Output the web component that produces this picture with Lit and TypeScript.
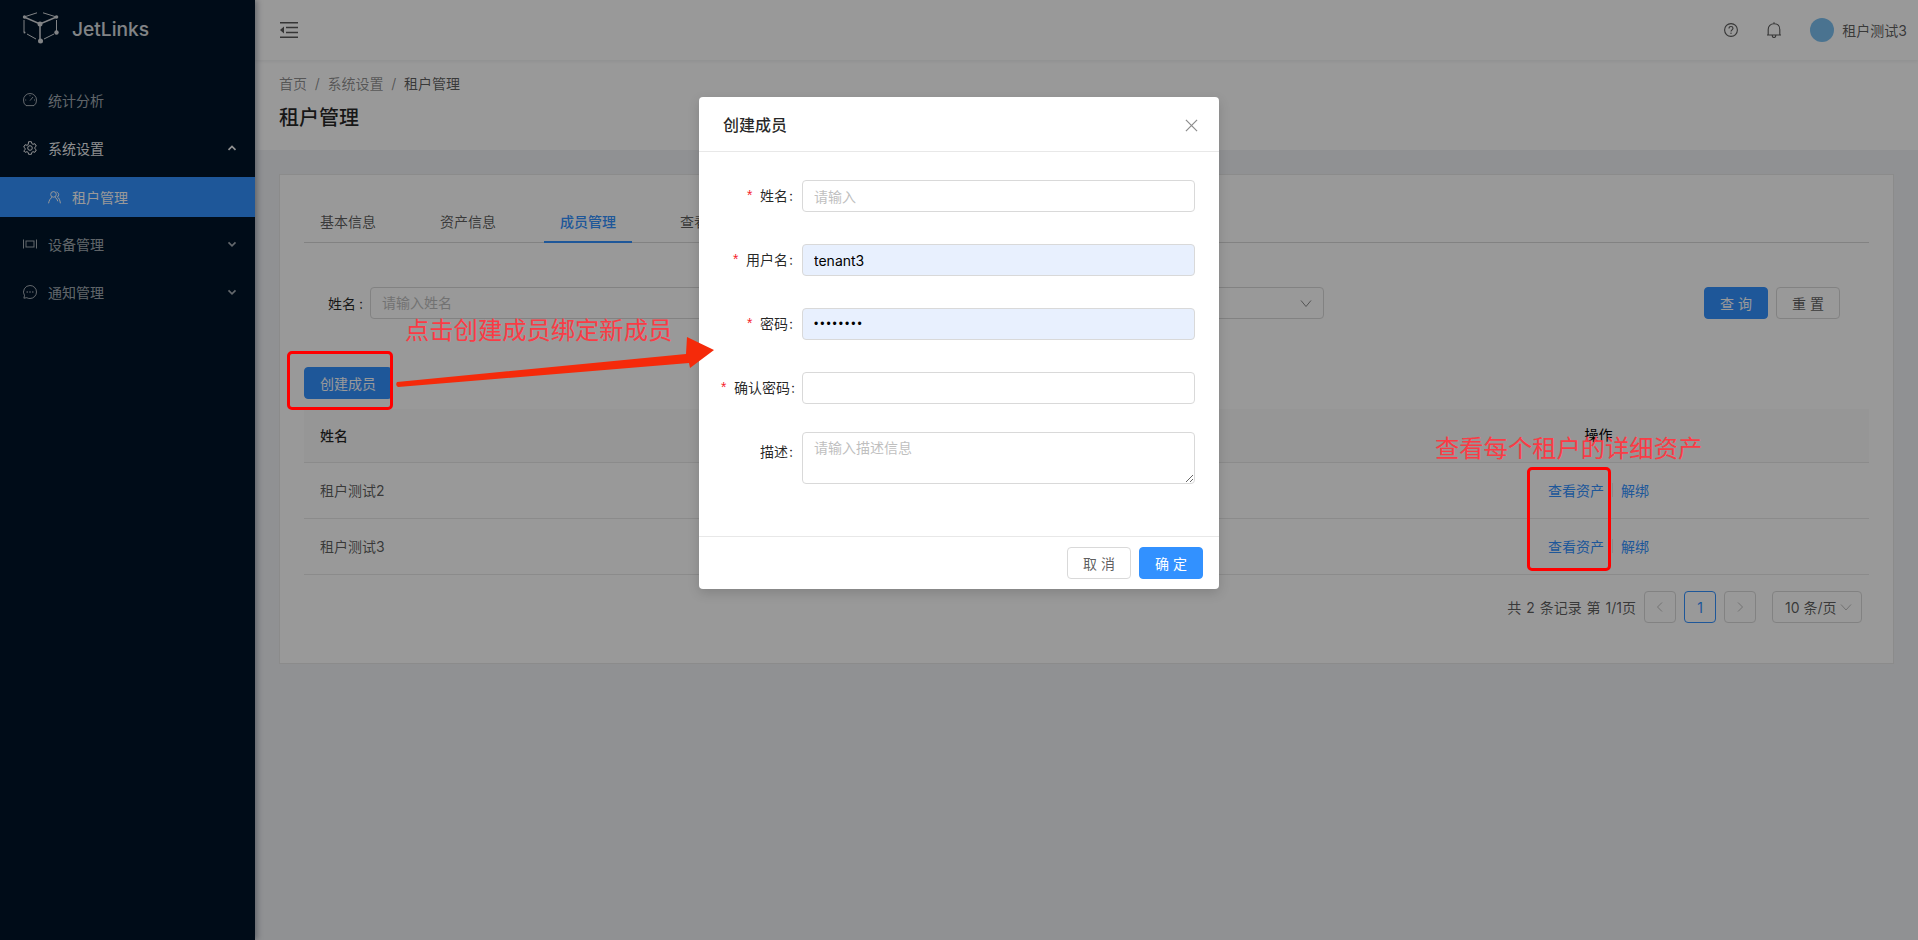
import { LitElement, html, css } from "lit";
import { customElement } from "lit/decorators.js";

const chevron = (up: boolean) => html`<svg class="chev" width="10" height="10" viewBox="0 0 10 10" fill="none" stroke="currentColor" stroke-width="1.7"><path d=${up ? "M1.5 6.800 5 3.400l3.500 3.400" : "M1.500 3.400 5 6.800l3.500-3.400"}></path></svg>`;

const icons = {
  dash: html`<svg class="mi" width="14" height="14" viewBox="0 0 14 14" fill="none" stroke="currentColor" stroke-width="1"><path d="M3 12.600h8A6.500 6.500 0 0 0 13.500 7 6.500 6.500 0 0 0 .5 7 6.500 6.500 0 0 0 3 12.600Z"></path><path d="m7 7.600 3-3.600M2.200 7h1M11 7h1M7 2.200v1"></path></svg>`,
  gear: html`<svg class="mi" width="14" height="14" viewBox="0 0 14 14" fill="none" stroke="currentColor" stroke-width="1"><path d="M5.600.7h2.800l.4 1.900 1.200.7 1.900-.6 1.400 2.400-1.500 1.300v1.200l1.500 1.300-1.400 2.400-1.900-.6-1.200.7-.4 1.900H5.600l-.4-1.900-1.200-.7-1.900.6L.7 9.900l1.500-1.300V7.400L.7 6.100l1.400-2.400 1.900.6 1.200-.7Z"></path><circle cx="7" cy="7" r="2.300"></circle></svg>`,
  users: html`<svg class="mi" width="13" height="13" viewBox="0 0 13 13" fill="none" stroke="currentColor" stroke-width="1"><circle cx="5.500" cy="3.400" r="2.800"></circle><path d="M.6 12.300C1 9.500 2.400 7.200 4 6.300M7 6.300c1.300.7 2.300 2 2.800 4"></path><path d="M8.600 1c1.300.3 2.100 1.400 2.100 2.600 0 1-.5 1.900-1.300 2.400 1.400.8 2.600 3 3 6.300"></path></svg>`,
  device: html`<svg class="mi" width="14" height="14" viewBox="0 0 14 14" fill="none" stroke="currentColor" stroke-width="1"><path d="M.5 2.500v9M13.500 2.500v9"></path><rect x="3" y="4" width="8" height="6"></rect></svg>`,
  msg: html`<svg class="mi" width="14" height="14" viewBox="0 0 14 14" fill="none" stroke="currentColor" stroke-width="1"><path d="M7 .5a6.500 6.500 0 1 1 0 13c-1.200 0-2.300-.2-3.200-.8l-2.900.5.6-2.700A6.500 6.500 0 0 1 7 .5Z"></path><circle cx="4.200" cy="7" r=".8" fill="currentColor" stroke="none"></circle><circle cx="7" cy="7" r=".8" fill="currentColor" stroke="none"></circle><circle cx="9.800" cy="7" r=".8" fill="currentColor" stroke="none"></circle></svg>`,
};

@customElement("app-root")
export class AppRoot extends LitElement {
  static styles = css`
    :host { display: block; width: 1918px; height: 940px; position: relative; overflow: hidden;
      font-family: Inter, "Noto Sans CJK SC", sans-serif; font-size: 14px; color: rgba(0,0,0,.65); background: #f0f2f5; }
    * { box-sizing: border-box; }
    .app { display: grid; grid-template-columns: 255px 1fr; height: 940px; }
    .side { background: #001529; color: rgba(255,255,255,.65); box-shadow: 2px 0 6px rgba(0,21,41,.35); position: relative; z-index: 1; }
    .logo { height: 60px; display: flex; align-items: center; padding-left: 22px; gap: 12px; color: #fff; opacity: .85; }
    .logo span { font-size: 19.200px; font-weight: 500; margin-top: -2px; }
    .logo svg { margin-top: -2px; }
    .menu { padding-top: 21px; }
    .mitem { height: 40px; margin-bottom: 8px; display: flex; align-items: center; padding: 0 0 2px 23px; gap: 11px; position: relative; }
    .mitem.open { color: rgba(255,255,255,.95); }
    .mitem .chev { position: absolute; right: 18px; top: 14px; }
    .msub { height: 40px; margin: 0 0 8px; display: flex; align-items: center; padding-left: 48px; gap: 11px; background: #3291ff; color: #fff; }
    .main { display: flex; flex-direction: column; min-width: 0; }
    .top { height: 60px; background: #fff; display: flex; align-items: center; padding: 0 11px 0 25px; box-shadow: 0 1px 4px rgba(0,21,41,.08); position: relative; }
    .top .right { margin-left: auto; display: flex; align-items: center; color: rgba(0,0,0,.65); }
    .top .q { margin-right: 29px; }
    .top .b { margin-right: 29px; }
    .avatar { width: 24px; height: 24px; border-radius: 50%; background: #7cc0f0; margin-right: 8px; }
    .phead { background: #fff; height: 90px; padding: 13px 24px 0; }
    .crumb { display: flex; line-height: 22px; color: rgba(0,0,0,.45); }
    .crumb i { font-style: normal; padding: 0 7.750px; }
    .crumb b { font-weight: 400; color: rgba(0,0,0,.65); }
    .title { font-size: 20px; font-weight: 500; line-height: 28px; color: rgba(0,0,0,.85); margin-top: 9px; }
    .card { margin: 24px 24px 0; height: 490px; background: #fff; border: 1px solid #e8e8e8; padding: 24px 24px; }
    .tabs { display: flex; height: 44px; border-bottom: 1px solid #d9d9d9; }
    .tab { width: 88px; margin-right: 32px; text-align: center; line-height: 22px; padding-top: 12px; height: 44px; }
    .tab.on { color: #3291ff; font-weight: 500; border-bottom: 2px solid #3291ff; }
    .search { display: flex; align-items: center; height: 32px; margin-top: 44px; padding-left: 24px; color: rgba(0,0,0,.85); }
    .search .lab { width: 42px; }
    .search .colon { margin-left: 3px; }
    .colon { margin-left: 1px; }
    .fake { height: 32px; border: 1px solid #d9d9d9; border-radius: 4px; padding: 0 11px; line-height: 30px; color: #bfbfbf; display: flex; align-items: center; justify-content: space-between; }
    .f1 { width: 434px; margin-right: 120px; }
    .f2 { width: 400px; color: #bfbfbf; }
    .btn { height: 32px; border-radius: 4px; border: 1px solid #d9d9d9; background: #fff; color: rgba(0,0,0,.65); display: flex; align-items: center; justify-content: center; font-size: 14px; }
    .btn.pri { background: #3291ff; border-color: #3291ff; color: #fff; }
    .sbtns { display: flex; gap: 8px; margin-left: auto; margin-right: 29px; }
    .sbtns .btn { width: 64px; }
    .create { width: 88px; margin-top: 48px; }
    .table { margin-top: 10px; }
    .tr { display: grid; grid-template-columns: 1fr 541px; align-items: center; border-bottom: 1px solid #e8e8e8; height: 56px; padding: 0 0 2px 16px; }
    .tr.h { height: 54px; background: #fafafa; color: rgba(0,0,0,.85); font-weight: 500; }
    .ops { text-align: center; display: flex; justify-content: center; align-items: center; }
    .ops a { color: #3291ff; }
    .ops .d { width: 1px; height: 14px; background: #e8e8e8; margin: 0 8px; }
    .h .ops { color: #000; font-weight: 400; margin-top: -1px; }
    .pager { display: flex; align-items: center; justify-content: flex-end; margin-top: 16px; padding-right: 7px; height: 32px; }
    .pager .sum { margin-right: 8px; word-spacing: 1px; }
    .pg { width: 32px; height: 32px; border: 1px solid #d9d9d9; border-radius: 4px; margin-right: 8px; display: flex; align-items: center; justify-content: center; color: #bfbfbf; }
    .pg.cur { border-color: #3291ff; color: #3291ff; }
    .sel { width: 90px; height: 32px; border: 1px solid #d9d9d9; border-radius: 4px; margin-left: 8px; padding-left: 12px; display: flex; align-items: center; gap: 3px; white-space: nowrap; }
    .mask { position: absolute; inset: 0; background: rgba(0,0,0,.4); z-index: 5; }
    .modal { position: absolute; left: 699px; top: 97px; width: 520px; height: 492px; background: #fff; border-radius: 4px; box-shadow: 0 4px 12px rgba(0,0,0,.15); z-index: 6; display: flex; flex-direction: column; }
    .mh { height: 55px; border-bottom: 1px solid #e8e8e8; display: flex; align-items: center; justify-content: space-between; padding: 0 21px 0 24px; font-size: 16px; font-weight: 500; color: rgba(0,0,0,.85); }
    .mh svg { margin-top: 2px; }
    .mb { flex: 1; padding: 24px 24px 0 0; display: flex; flex-direction: column; gap: 24px; }
    .fi { display: grid; grid-template-columns: 103px 393px; column-gap: 0; }
    .fl { height: 40px; line-height: 40px; text-align: right; color: rgba(0,0,0,.85); white-space: nowrap; padding-right: 9px; }
    .fl.wide { padding-right: 7px; }
    .fl em { color: #f5222d; font-style: normal; font-family: "Liberation Mono", monospace; margin-right: 2px; }
    .fc { height: 40px; display: flex; align-items: center; }
    .fc input { width: 393px; height: 32px; border: 1px solid #d9d9d9; border-radius: 4px; padding: 0 11px; font: inherit; color: rgba(0,0,0,.85); outline: none; background: #fff; }
    .fc input.auto { background: #e8f0fe; color: #000; }
    .fc input.pw { font-family: "Liberation Sans", sans-serif; font-size: 12px; letter-spacing: 2px; }
    input::placeholder, textarea::placeholder { color: #bfbfbf; opacity: 1; }
    textarea { width: 393px; height: 52px; display: block; border: 1px solid #d9d9d9; border-radius: 4px; padding: 4px 11px; font: inherit; line-height: 22px; outline: none; }
    .mf { height: 53px; border-top: 1px solid #e8e8e8; display: flex; align-items: center; justify-content: flex-end; padding: 0 16px; gap: 8px; }
    .mf .btn { width: 64px; }
    .rect { position: absolute; border: 3px solid #f00; border-radius: 5px; z-index: 7; }
    .r1 { left: 287px; top: 351px; width: 106px; height: 59px; }
    .r2 { left: 1527px; top: 467px; width: 84px; height: 104px; }
    .note { position: absolute; z-index: 7; color: #fb3b45; font-size: 24.300px; line-height: 32px; white-space: nowrap; font-family: "Noto Sans CJK SC", sans-serif; font-weight: 400; }
    .n1 { left: 405px; top: 313px; }
    .n2 { left: 1435px; top: 431px; }
    .arrow { position: absolute; left: 390px; top: 330px; z-index: 7; }
  `;

  render() {
    return html`
      <div class="app">
        <aside class="side">
          <div class="logo">
            <svg width="38" height="34" viewBox="0 0 38 34" fill="none" stroke="currentColor">
              <path d="M2 5 18 12 34.500 5M18 12v17" stroke-width="1.500"></path>
              <path d="M2 5 15 .8M21 .8 34.500 5M2 8v12M34.500 8v12M5 22l9 5M22 27l10-5" stroke-width="1"></path>
              <circle cx="2.500" cy="5" r="1.700" fill="currentColor" stroke="none"></circle>
              <circle cx="18" cy="12" r="2.500" fill="currentColor" stroke="none"></circle>
              <circle cx="34.500" cy="5" r="1.800" fill="currentColor" stroke="none"></circle>
              <circle cx="34.500" cy="20.500" r="2.200" fill="currentColor" stroke="none"></circle>
              <circle cx="18.500" cy="29" r="2.500" fill="currentColor" stroke="none"></circle>
              <circle cx="2.500" cy="20.500" r="1" fill="currentColor" stroke="none"></circle>
            </svg>
            <span>JetLinks</span>
          </div>
          <nav class="menu">
            <div class="mitem">${icons.dash}<span>统计分析</span></div>
            <div class="mitem open">${icons.gear}<span>系统设置</span>${chevron(true)}</div>
            <div class="msub">${icons.users}<span>租户管理</span></div>
            <div class="mitem">${icons.device}<span>设备管理</span>${chevron(false)}</div>
            <div class="mitem">${icons.msg}<span>通知管理</span>${chevron(false)}</div>
          </nav>
        </aside>
        <main class="main">
          <header class="top">
            <svg width="18" height="16" viewBox="0 0 18 16" fill="currentColor"><path d="M0 0h18v1.500H0zM0 14.500h18V16H0zM6 4.800h12v1.500H6zM6 9.700h12v1.500H6zM4 4.500v7L0 8z"></path></svg>
            <div class="right">
              <svg class="q" width="14" height="14" viewBox="0 0 14 14" fill="none" stroke="currentColor" stroke-width="1.100"><circle cx="7" cy="7" r="6.400"></circle><path d="M5 5.400C5 4.200 5.900 3.500 7 3.500s2 .8 2 1.800c0 1.500-2 1.600-2 3.200"></path><circle cx="7" cy="10.300" r=".7" fill="currentColor" stroke="none"></circle></svg>
              <svg class="b" width="14" height="16" viewBox="0 0 14 16" fill="none" stroke="currentColor" stroke-width="1.100"><path d="M1.200 13V7.400C1.200 4 3.600 1.800 7 1.800s5.800 2.200 5.800 5.600V13M0 13h14M7 .3v1.500M5.200 13.500c0 1.200.8 2 1.800 2s1.800-.8 1.800-2"></path></svg>
              <div class="avatar"></div>
              <span>租户测试3</span>
            </div>
          </header>
          <section class="phead">
            <div class="crumb"><span>首页</span><i>/</i><span>系统设置</span><i>/</i><b>租户管理</b></div>
            <div class="title">租户管理</div>
          </section>
          <section class="card">
            <div class="tabs">
              <div class="tab">基本信息</div>
              <div class="tab">资产信息</div>
              <div class="tab on">成员管理</div>
              <div class="tab">查看权限</div>
            </div>
            <div class="search">
              <span class="lab">姓名<span class="colon">:</span></span>
              <div class="fake f1">请输入姓名</div>
              <div class="fake f2"><span></span><svg width="12" height="12" viewBox="0 0 12 12" fill="none" stroke="#8c8c8c"><path d="M1 3.500 6 9.500l5-6"></path></svg></div>
              <div class="sbtns">
                <div class="btn pri">查 询</div>
                <div class="btn">重 置</div>
              </div>
            </div>
            <div class="btn pri create">创建成员</div>
            <div class="table">
              <div class="tr h"><span>姓名</span><div class="ops">操作</div></div>
              <div class="tr"><span>租户测试2</span><div class="ops"><a>查看资产</a><span class="d"></span><a>解绑</a></div></div>
              <div class="tr"><span>租户测试3</span><div class="ops"><a>查看资产</a><span class="d"></span><a>解绑</a></div></div>
            </div>
            <div class="pager">
              <span class="sum">共 2 条记录 第 1/1页</span>
              <div class="pg"><svg width="10" height="12" viewBox="0 0 10 12" fill="none" stroke="currentColor"><path d="M7 1.500 2.500 6 7 10.500"></path></svg></div>
              <div class="pg cur">1</div>
              <div class="pg"><svg width="10" height="12" viewBox="0 0 10 12" fill="none" stroke="currentColor"><path d="M3 1.500 7.500 6 3 10.500"></path></svg></div>
              <div class="sel">10 条/页<svg width="12" height="12" viewBox="0 0 12 12" fill="none" stroke="#bfbfbf"><path d="M1 3.500 6 9l5-5.500"></path></svg></div>
            </div>
          </section>
        </main>
      </div>
      <div class="mask"></div>
      <div class="modal">
        <div class="mh"><span>创建成员</span>
          <svg width="13" height="13" viewBox="0 0 14 14" fill="none" stroke="#8c8c8c" stroke-width="1.300"><path d="m1 1 12 12M13 1 1 13"></path></svg>
        </div>
        <div class="mb">
          <div class="fi"><div class="fl"><em>*</em> 姓名<span class="colon">:</span></div><div class="fc"><input placeholder="请输入" /></div></div>
          <div class="fi"><div class="fl"><em>*</em> 用户名<span class="colon">:</span></div><div class="fc"><input class="auto" value="tenant3" /></div></div>
          <div class="fi"><div class="fl"><em>*</em> 密码<span class="colon">:</span></div><div class="fc"><input class="auto pw" type="password" value="12345678" /></div></div>
          <div class="fi"><div class="fl wide"><em>*</em> 确认密码<span class="colon">:</span></div><div class="fc"><input type="password" /></div></div>
          <div class="fi"><div class="fl">描述<span class="colon">:</span></div><div><textarea placeholder="请输入描述信息"></textarea></div></div>
        </div>
        <div class="mf"><div class="btn">取 消</div><div class="btn pri">确 定</div></div>
      </div>
      <div class="note n1">点击创建成员绑定新成员</div>
      <div class="note n2">查看每个租户的详细资产</div>
      <div class="rect r1"></div>
      <div class="rect r2"></div>
      <svg class="arrow" width="330" height="60" viewBox="390 330 330 60">
        <path d="M397 382 686 354 687 337 714 350 690 368 689 363 398 387Q395 385 397 382Z" fill="#f52a0a"></path>
      </svg>
    `;
  }
}
